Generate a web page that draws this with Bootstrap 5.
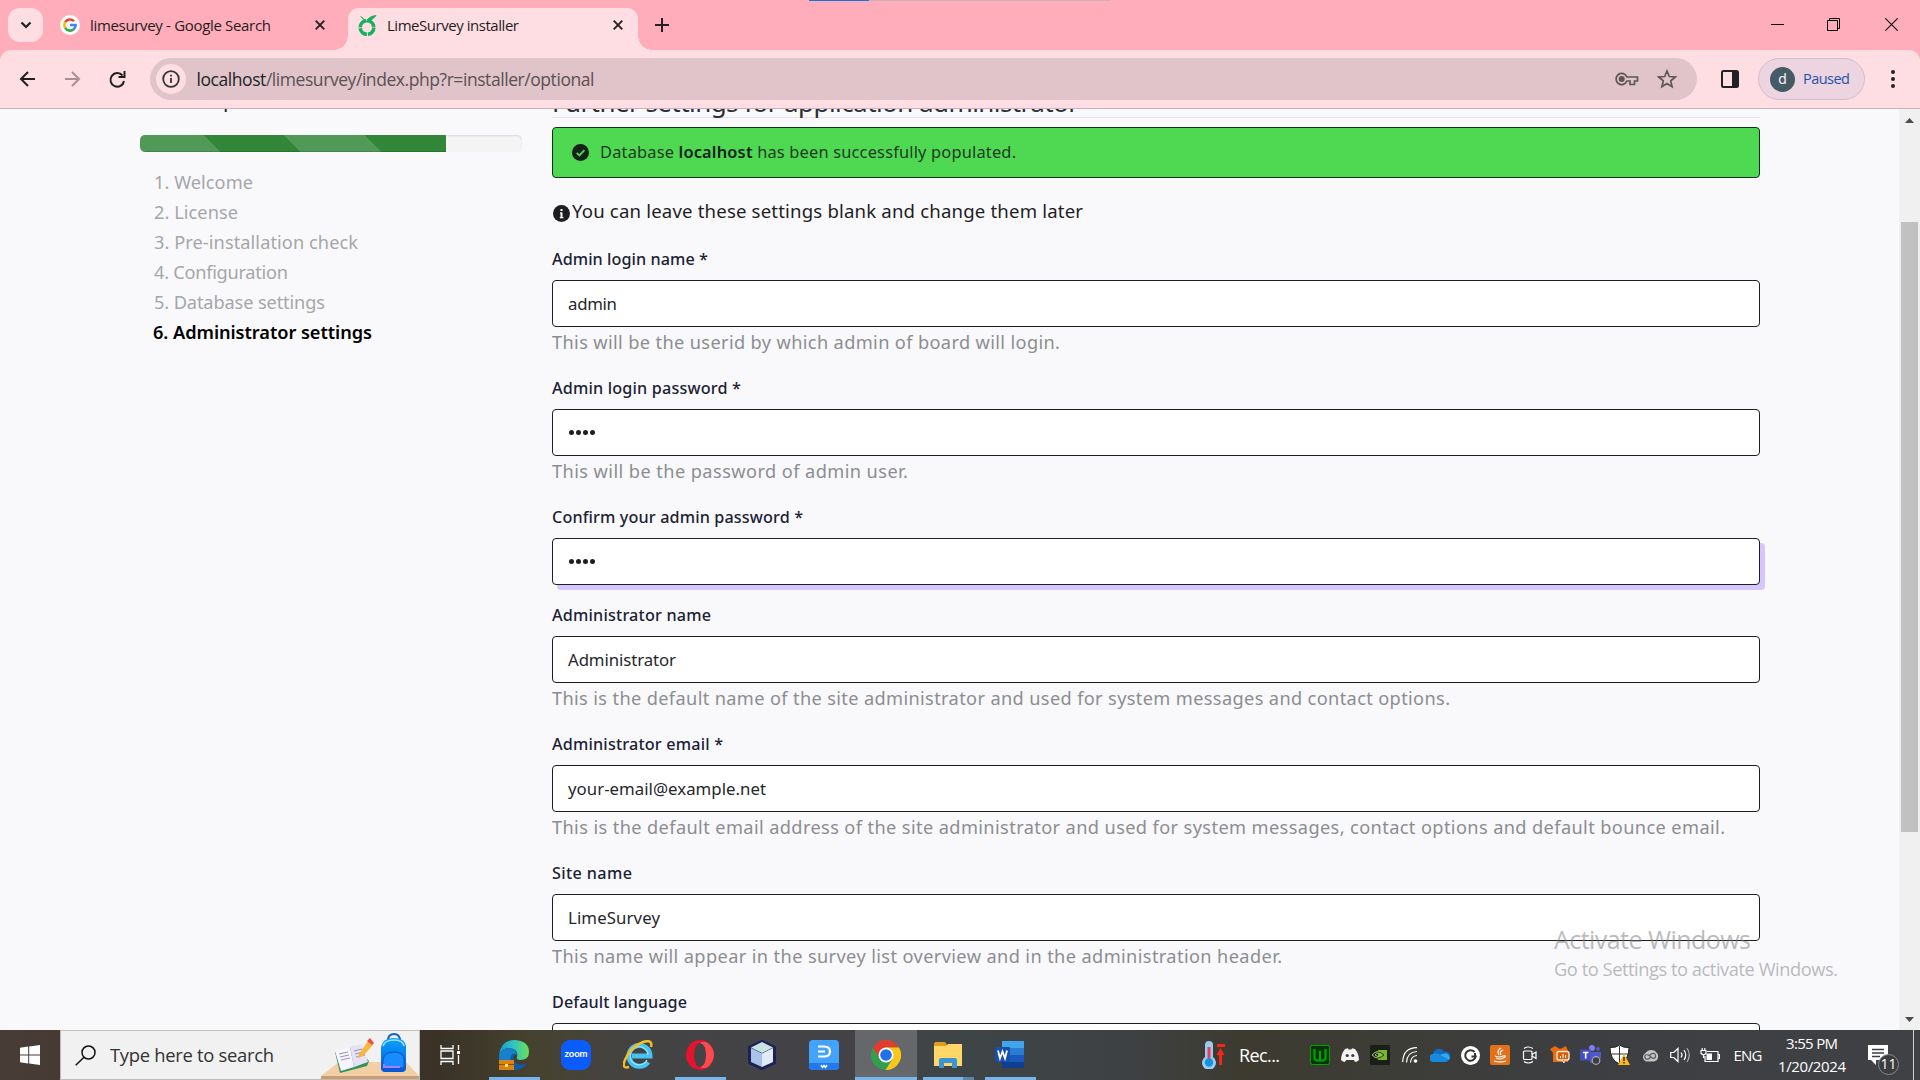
<!DOCTYPE html>
<html lang="en">
<head>
<meta charset="utf-8">
<title>LimeSurvey installer</title>
<link href="https://cdn.jsdelivr.net/npm/bootstrap@5.3.0/dist/css/bootstrap.min.css" rel="stylesheet">
<style>
  body{width:1920px;height:1080px;overflow:hidden;background:#f9f9fc;font-family:"Open Sans","Noto Sans",sans-serif;color:#1e1e1e}
  svg{display:block;flex:none}
  [data-w]{white-space:nowrap}
  .tabstrip{height:50px;background:#ffadba;padding-left:8px}
  .tabsearch{width:35px;height:34px;border-radius:12px;background:#ffdee3}
  .btab{height:42px;margin-top:8px;font-size:15px}
  .btab .ttl{line-height:34px}
  .tab-idle{width:305px;padding:0 23px 8px 17px}
  .tab-on{width:290px;background:#ffdee3;border-radius:11px 11px 0 0;padding:0 15px 8px 8px;position:relative}
  .tab-on:before,.tab-on:after{content:"";position:absolute;bottom:0;width:14px;height:14px}
  .tab-on:before{left:-14px;background:radial-gradient(circle at 0 0,transparent 13.5px,#ffdee3 14px)}
  .tab-on:after{right:-14px;background:radial-gradient(circle at 100% 0,transparent 13.5px,#ffdee3 14px)}
  .loadline{position:absolute;left:809px;top:0;width:301px;height:1px;background:linear-gradient(90deg,#1a73d8 60px,#c9b3ba 60px)}
  .toolwrap{background:#ffadba}
  .toolbar{height:59px;background:#ffdee3;border-bottom:1px solid #cdb0b8;border-radius:11px 11px 0 0;padding:0 18px 0 17px}
  .omni{width:1547px;height:42px;border-radius:21px;background:#e0c4c9;padding:0 20px 0 6px;font-size:17.5px;color:#5b5054}
  .infodot{width:30px;height:30px;border-radius:50%;background:#ffdee3}
  .chip{width:107px;height:42px;border:1px solid #d6bccb;border-radius:21px;background:#ecd4e1;color:#2452a5;font-size:14.5px;padding-left:11px}
  .avatar{width:25px;height:25px;border-radius:50%;background:#455a64;color:#fff;font-size:14px;line-height:24px}
  .page{height:921px;overflow:hidden;font-family:"Noto Sans",Roboto,sans-serif}
  .side{width:382px;margin-left:140px}
  .main{width:1208px;margin-left:30px}
  .pct{height:26px;font-size:21px;line-height:30px;margin-top:-25px}
  .bar{height:17px;margin-top:25px;border-radius:5px;background:#f4f4f4;box-shadow:inset 0 1px 2px rgba(0,0,0,.12)}
  .bar .progress-bar{background:repeating-linear-gradient(45deg,#509956 0 56.8px,#328637 56.8px 113.8px);box-shadow:inset 0 -1px 0 rgba(0,0,0,.13)}
  .steps{margin:15px 0 0 14px;font-size:18.2px;line-height:30px;color:#a5a6a8}
  .steps .now{color:#000;font-weight:600;margin-left:-1px}
  .hd{height:27px;font-size:26px;line-height:32px;margin-top:-18px;color:#2c2e38;border-bottom:1px solid #e4e4e8}
  .hd span{display:block;margin-top:-5px}
  .okbox{height:51px;margin:9px 0 0;padding:0 0 0 19px;background:#4fd953;border:1px solid #14301a;border-radius:4px;font-size:16.4px;color:#1e3a22}
  .okbox b{color:#14231a;font-weight:600}
  .note{height:30px;margin-top:18px;font-size:18.6px}
  .lbl{height:24px;line-height:24px;font-size:16.2px;font-weight:500;color:#1b2233;margin:0 0 9px}
  .fld{height:47px;border:1px solid #1e1e1e;border-radius:4px;background:#fff;padding:0 15px;font-size:16.8px;color:#26272b;line-height:45px}
  .fld.foc{box-shadow:5px 5px 0 #d5c7fd}
  .hlp{height:31px;line-height:31px;font-size:18.2px;color:#8c8d91}
  .grp{height:129px;flex:none}
  .grp.short{height:98px}
  .dots{gap:2px;height:45px;padding-left:1px}
  .dots i{width:5px;height:5px;border-radius:50%;background:#1e1e1e}
  .sbar{width:21px;background:#f0f0f0}
  .thumb{width:17px;height:610px;background:#c1c1c1;margin-top:99px}
  .wmark{position:absolute;left:1554px;top:922px;color:rgba(120,120,120,.5);line-height:1}
  .wm1{font-size:25px;height:34px;line-height:34px}
  .wm2{font-size:18.3px;height:26px;line-height:26px}
  .task{height:50px;background:linear-gradient(90deg,#483c36 0,#42362e 200px,#3a3227 440px,#46422f 530px,#444344 640px,#434247 860px,#3e4547 960px,#3e4143 1130px,#3d3b30 1240px,#3c3d37 1400px,#3d3e41 1560px,#404145 1920px);color:#fff;position:relative}
  .startb{width:60px}
  .srch{width:360px;height:50px;background:#f1f1f1;border:1px solid #bdbdbd;color:#333;font-size:18.4px;padding-left:14px}
  .slot{width:62px;height:50px}
  .view{width:61px;margin-right:2px}
  .hot{background:#66676b}
  .run{box-shadow:inset 0 -3px 0 #76b5ee}
  .run-s{background:linear-gradient(#76b5ee,#76b5ee) 50% 100%/51px 3px no-repeat}
  .run-f{background:linear-gradient(90deg,#76b5ee 40px,#5b86a8 40px) 6px 100%/51px 3px no-repeat}
  .zoomi{width:30px;height:30px;border-radius:9px;background:#0b5cff;font:700 9.5px/28px Lato,sans-serif}
  .meteo{width:264px;padding-left:161px;font-size:18px}
  .tr{width:30px}
  .eng{width:46px;font-size:15px}
  .clk{width:82px;font-size:15px;line-height:23px;margin-top:-1px}
  .noti{width:60px;padding-left:15px}
  .cnt{position:absolute;left:1878px;top:24px;width:21px;height:21px;border-radius:50%;border:1px solid #8b8c90;background:#3b3c40;font-size:14px;line-height:18px}
</style>
<script src="https://cdn.jsdelivr.net/npm/bootstrap@5.3.0/dist/js/bootstrap.bundle.min.js"></script>
</head>
<body>
<div class="loadline"></div>
<header>
  <div class="tabstrip d-flex">
    <div class="tabsearch d-flex align-items-center justify-content-center mt-2">
      <svg width="12" height="8" fill="none" stroke="#1f1f1f" stroke-width="2.2"><path d="M1.5 1.5 6 6l4.500-4.500"/></svg>
    </div>
    <div class="btab tab-idle d-flex align-items-center">
      <svg width="20" height="20" viewBox="0 0 20 20" fill="none" stroke-width="2.600"><circle cx="10" cy="10" r="10" fill="#fff"/><path d="M5.200 7.200A5.600 5.600 0 0 1 14 6.100" stroke="#ea4335"/><path d="M5.200 12.800a5.600 5.600 0 0 1 0-5.700" stroke="#fbbc05"/><path d="M13.700 14.200a5.600 5.600 0 0 1-8.500-1.400" stroke="#34a853"/><path d="M10 10h5.600a5.600 5.600 0 0 1-1.900 4.200" stroke="#4285f4"/></svg>
      <span class="ttl" style="margin-left:10px"><span data-w="181">limesurvey - Google Search</span></span>
      <svg class="ms-auto" width="10" height="10" stroke="#222" stroke-width="1.900"><path d="M.7.7 9.300 9.300M9.300.7.7 9.300"/></svg>
    </div>
    <div class="btab tab-on d-flex align-items-center">
      <svg width="22" height="22" viewBox="0 0 22 22" fill="none" stroke="#17b060"><circle cx="11" cy="13.500" r="6.800" stroke-width="3.600" stroke-dasharray="9.700 .98"/><path d="M5 2.500 10.500 8Q12 2.500 20 1.500q-2 3.500-9.500 6.500z" fill="#17b060" stroke-width="1"/></svg>
      <span class="ttl" style="margin-left:9px"><span data-w="132">LimeSurvey installer</span></span>
      <svg class="ms-auto" width="10" height="10" stroke="#222" stroke-width="1.900"><path d="M.7.7 9.300 9.300M9.300.7.7 9.300"/></svg>
    </div>
    <svg style="margin:18px 0 0 17px" width="14" height="14" stroke="#222" stroke-width="2"><path d="M7 0v14M0 7h14"/></svg>
    <div class="d-flex ms-auto" style="gap:43px;padding:18px 22px 0 0">
      <svg width="13" height="13" stroke="#000"><path d="M0 6.500h13"/></svg>
      <svg width="13" height="13" fill="none" stroke="#000"><path d="M.5 2.500h10v10H.5zM2.500 2.500v-2h10v10h-2"/></svg>
      <svg width="13" height="13" stroke="#111" stroke-width="1.100" style="margin-left:2px"><path d="M.3.3l12.400 12.400M12.700.3.3 12.700"/></svg>
    </div>
  </div>
  <div class="toolwrap">
    <div class="toolbar d-flex align-items-center">
      <svg width="133" height="24" fill="none" stroke="#1f1f1f" stroke-width="2"><path d="M18 12H4.500M11 5 4 12l7 7"/><path d="M48 12h13.500M55 5l7 7-7 7" stroke="#a88f96"/><path d="M105.500 8.500A6.800 6.800 0 1 0 107 14M107.500 4v6h-6"/></svg>
      <div class="omni d-flex align-items-center">
        <div class="infodot d-flex align-items-center justify-content-center"><svg width="18" height="18" fill="none" stroke="#333" stroke-width="1.800"><circle cx="9" cy="9" r="7.800"/><path d="M9 8v5M9 4.800v1.800"/></svg></div>
        <span data-w="398" style="margin-left:10.5px"><span class="text-dark">localhost</span>/limesurvey/index.php?r=installer/optional</span>
        <svg class="ms-auto" width="24" height="14" fill="none" stroke="#5d5558" stroke-width="1.700"><path d="M11.900 5A5.600 5.600 0 1 0 11.900 9H15v3.500h4.500V9h3V5z"/><circle cx="6.700" cy="7" r="2.200" fill="#5d5558"/></svg>
        <svg style="margin-left:18px" width="20" height="20" viewBox="0 0 20 20" fill="none" stroke="#5d5558" stroke-width="1.700"><path d="m10 2 2.300 5.500 6 .5-4.600 3.900 1.400 5.800-5.100-3.100-5.100 3.100 1.400-5.800L1.700 8l6-.5z"/></svg>
      </div>
      <svg style="margin-left:24px" width="18" height="18"><rect x="1" y="1" width="16" height="16" rx="1.500" fill="none" stroke="#202124" stroke-width="2"/><path d="M11 1h6v16h-6z" fill="#202124"/></svg>
      <div class="chip d-flex align-items-center" style="margin-left:19px">
        <div class="avatar text-center">d</div><span data-w="47" style="margin-left:8px">Paused</span>
      </div>
      <svg class="ms-auto" style="margin-right:7px" width="4" height="20" fill="#202124"><circle cx="2" cy="3" r="2"/><circle cx="2" cy="10" r="2"/><circle cx="2" cy="17" r="2"/></svg>
    </div>
  </div>
</header>

<main class="page d-flex">
  <aside class="side">
    <div class="pct"><span data-w="141">83% completed</span></div>
    <div class="bar progress"><div class="progress-bar" style="width:80.1%"></div></div>
    <div class="steps">
      <div><span data-w="99">1. Welcome</span></div>
      <div><span data-w="84">2. License</span></div>
      <div><span data-w="204">3. Pre-installation check</span></div>
      <div><span data-w="134">4. Configuration</span></div>
      <div><span data-w="171">5. Database settings</span></div>
      <div class="now"><span data-w="219">6. Administrator settings</span></div>
    </div>
  </aside>
  <section class="main d-flex flex-column">
    <div class="hd flex-shrink-0"><span><em class="fst-normal" data-w="527">Further settings for application administrator</em></span></div>
    <div class="okbox d-flex align-items-center flex-shrink-0">
      <svg width="17" height="17"><circle cx="8.500" cy="8.500" r="8.500" fill="#17231a"/><path d="m4.700 8.800 2.700 2.700 5-5.300" fill="none" stroke="#4fd953" stroke-width="1.900"/></svg>
      <span data-w="416" style="margin-left:11px">Database <b>localhost</b> has been successfully populated.</span>
    </div>
    <div class="note d-flex align-items-center flex-shrink-0">
      <svg class="mt-1" style="margin-left:1px" width="17" height="17"><circle cx="8.500" cy="8.500" r="8.500" fill="#1e1e1e"/><path d="M8.500 7.500v5.300M8.500 4v2" fill="none" stroke="#fff" stroke-width="2"/><path d="M7 8h2M6.800 12.600h3.600" stroke="#fff" stroke-width="1.200"/></svg>
      <span data-w="511" style="margin-left:2px">You can leave these settings blank and change them later</span>
    </div>
    <div style="height:21px" class="flex-shrink-0"></div>
    <div class="grp"><div class="lbl"><span data-w="156">Admin login name *</span></div><div class="fld"><span data-w="49">admin</span></div><div class="hlp"><span data-w="508">This will be the userid by which admin of board will login.</span></div></div>
    <div class="grp"><div class="lbl"><span data-w="189">Admin login password *</span></div><div class="fld"><div class="dots d-flex align-items-center"><i></i><i></i><i></i><i></i></div></div><div class="hlp"><span data-w="356">This will be the password of admin user.</span></div></div>
    <div class="grp short"><div class="lbl"><span data-w="251">Confirm your admin password *</span></div><div class="fld foc"><div class="dots d-flex align-items-center"><i></i><i></i><i></i><i></i></div></div></div>
    <div class="grp"><div class="lbl"><span data-w="159">Administrator name</span></div><div class="fld"><span data-w="108">Administrator</span></div><div class="hlp"><span data-w="898">This is the default name of the site administrator and used for system messages and contact options.</span></div></div>
    <div class="grp"><div class="lbl"><span data-w="171">Administrator email *</span></div><div class="fld"><span data-w="198">your-email@example.net</span></div><div class="hlp"><span data-w="1173">This is the default email address of the site administrator and used for system messages, contact options and default bounce email.</span></div></div>
    <div class="grp"><div class="lbl"><span data-w="80">Site name</span></div><div class="fld"><span data-w="92">LimeSurvey</span></div><div class="hlp"><span data-w="730">This name will appear in the survey list overview and in the administration header.</span></div></div>
    <div class="grp"><div class="lbl"><span data-w="135">Default language</span></div><div class="fld"></div></div>
  </section>
  <div class="sbar ms-auto d-flex flex-column align-items-center">
    <svg width="9" height="5" style="margin-top:9px" fill="#4b4b4b"><path d="M4.500 0 9 5H0z"/></svg>
    <div class="thumb"></div>
    <svg width="9" height="5" class="mt-auto mb-2" fill="#4b4b4b"><path d="M0 0h9L4.500 5z"/></svg>
  </div>
</main>

<div class="wmark"><div class="wm1"><span data-w="197">Activate Windows</span></div><div class="wm2"><span data-w="284">Go to Settings to activate Windows.</span></div></div>

<footer class="task d-flex align-items-center">
  <div class="startb d-flex justify-content-center"><svg width="20" height="20" fill="#fff"><path d="M0 2.800 8.200 1.600v7.900H0zM9.200 1.400 20 0v9.500H9.200zM0 10.500h8.200v7.900L0 17.200zM9.200 10.500H20V20L9.200 18.600z"/></svg></div>
  <div class="srch d-flex align-items-center">
    <svg width="21" height="21" fill="none" stroke="#111" stroke-width="1.500"><circle cx="13.500" cy="7.500" r="6.500"/><path d="M9 12.200.7 20.300"/></svg>
    <span data-w="164" style="margin-left:14px">Type here to search</span>
    <svg class="ms-auto" width="98" height="48" viewBox="0 0 98 48">
      <defs><linearGradient id="bp" x2="0" y2="1"><stop stop-color="#0aa4ff"/><stop offset="1" stop-color="#0756d8"/></linearGradient></defs>
      <path d="M18 31h67l13 14H0z" fill="#f3cfa6"/><path d="M0 45h98v3H0z" fill="#c89d71"/>
      <path d="M14 21l20-6 14 15-2 5-27 7z" fill="#32925a"/><path d="m14 20 15-4 4 20-13 4z" fill="#f7f5ff"/><path d="m29 16 12-3 6 18-14 5z" fill="#e6e2f5"/>
      <path d="m18 23 9-2m-8 5 9-2m-8 5 9-2m4-7 8-2m-7 5 9-2m-8 5 9-2" stroke="#9892b2" stroke-width="1"/>
      <path d="m38 23 9-13 5 4-10 11-5 2z" fill="#f6b73c"/><path d="m46 10 3-3 4 5-2 2z" fill="#f04e45"/>
      <path d="M67 10q0-7 6-7t6 7" fill="none" stroke="#1767bc" stroke-width="2"/><path d="M60 17q1-10 13-10t12 10v20q0 4-4 4H64q-4 0-4-4z" fill="url(#bp)"/><path d="M62 29q1-8 11-8t10 8v8H62z" fill="#188bff" stroke="#0754bd"/><path d="M63 33v3h16" fill="none" stroke="#a87dff" stroke-width="2"/><path d="M62 15q2-6 11-6t10 6" fill="none" stroke="#a4e2ff" stroke-width="1.500"/>
    </svg>
  </div>
  <div class="slot view d-flex align-items-center justify-content-center"><svg width="21" height="20" fill="none" stroke="#fff" stroke-width="1.300"><path d="M1 0v3.500h12V0M1 20v-3.500h12V20M1 6h12v7.500H1zM18.500 0v5M18.500 10v9"/><path d="M17 6h3v3h-3z" fill="#fff" stroke="none"/></svg></div>
  <div class="slot run-s d-flex align-items-center justify-content-center"><svg width="30" height="30" viewBox="0 0 30 30"><defs><linearGradient id="eg"><stop stop-color="#1599d5"/><stop offset=".5" stop-color="#32c6c1"/><stop offset="1" stop-color="#6be052"/></linearGradient></defs><path d="M0 15Q1 27 16 30q8 0 12-7-8 4-12-1-3-5 0-8Q4 7 0 15z" fill="#0e5ca8"/><path d="M0 15Q2 0 16 0q14 1 14 12 0 8-9 8-4 0-3-3 2-8-8-9Q3 8 0 15z" fill="url(#eg)"/><path d="M0 16q2-8 11-8 7 1 7 8-1-3-4-2-4 2-2 10H0z" fill="#1680cc"/><path d="M0 20h15v10H0z" fill="#d98310"/><path d="M0 24h15v1H0z" fill="#8d4d06"/><path d="M6 24h3v3H6z" fill="#ffe06a"/></svg></div>
  <div class="slot d-flex align-items-center justify-content-center"><div class="zoomi text-center">zoom</div></div>
  <div class="slot d-flex align-items-center justify-content-center"><svg width="30" height="30" viewBox="0 0 30 30" fill="none"><path d="M25 22a10.500 10.500 0 1 1 2-6H9" stroke="#47c3f3" stroke-width="5"/><path d="M24 20a9 9 0 1 1 1-5" stroke="#9be6ff" stroke-width="1.200"/><path d="M6 27q-8 2-4-7Q7 7 20 2q10-3 8 5" stroke="#f5bd23" stroke-width="2.500"/></svg></div>
  <div class="slot run-s d-flex align-items-center justify-content-center"><svg width="30" height="30" viewBox="0 0 30 30"><path fill-rule="evenodd" d="M15 0a14 15 0 1 1 0 30 14 15 0 1 1 0-30zm0 3a6 12 0 1 0 0 24 6 12 0 1 0 0-24z" fill="#e3142c"/><path d="M15 3q4-3 9 1 10 10 0 22-5 4-9 1 6-1 6-12T15 3z" fill="#fa4c50"/></svg></div>
  <div class="slot d-flex align-items-center justify-content-center"><svg width="30" height="30" viewBox="0 0 30 30" stroke-linejoin="round"><path d="M15 1 28 7v16L15 29 2 23V7z" fill="#1b2359" stroke="#1b2359" stroke-width="2"/><path d="M15 2 26 7.500 15 13 4 7.500z" fill="#c8e3e2"/><path d="M4 8l11 5.500V27L4 22z" fill="#a9c2e8"/><path d="M26 8l-11 5.500V27l11-5z" fill="#e1ebf8"/></svg></div>
  <div class="slot d-flex align-items-center justify-content-center"><svg width="30" height="30" viewBox="0 0 30 30" fill="none"><rect width="30" height="30" rx="4" fill="#43a3fb"/><path d="M0 23h30v3q0 4-4 4H4q-4 0-4-4z" fill="#2477ec"/><path d="M9 6.500h6q6 0 6 5t-6 5H9M9 11.500h7" stroke="#fff" stroke-width="2.200"/><path d="m12 25 1.500 2.500L15 25.500l1.500 2L18 25" stroke="#fff" stroke-width="1.500"/></svg></div>
  <div class="slot hot run d-flex align-items-center justify-content-center"><svg width="30" height="30" viewBox="0 0 30 30"><circle cx="15" cy="15" r="15" fill="#30a04f"/><path d="M2 7.500A15 15 0 0 1 28 7.500H15L8.500 18.500z" fill="#e33b2e"/><path d="M15 7.500h13A15 15 0 0 1 14.500 30l7-11z" fill="#fcc61b"/><circle cx="15" cy="15" r="7.500" fill="#fff"/><circle cx="15" cy="15" r="5.800" fill="#1f72e8"/></svg></div>
  <div class="slot run-f d-flex align-items-center justify-content-center"><svg width="30" height="26" viewBox="0 0 30 26"><path d="M1 2q0-2 2-2h9l2 3h13q2 0 2 2v19H1z" fill="#dda01a"/><path d="M1 4h12l2-2h14v22H1z" fill="#ffd768"/><path d="M6 26v-8q0-2 2-2h14q2 0 2 2v8h-5v-5h-8v5z" fill="#3b94d4"/></svg></div>
  <div class="slot run-s d-flex align-items-center justify-content-center"><svg width="30" height="28" viewBox="0 0 30 28"><path d="M7 0h22v7H7z" fill="#41a5ee"/><path d="M7 7h22v7H7z" fill="#2b7cd3"/><path d="M7 14h22v7H7z" fill="#185abd"/><path d="M7 21h22v6H7z" fill="#103f91"/><rect y="6" width="15" height="15" rx="1" fill="#174fa9"/><path d="m3 9.500 2 8 2.500-7 2.500 7 2-8" fill="none" stroke="#fff" stroke-width="1.800"/></svg></div>
  <div class="meteo d-flex align-items-center">
    <svg width="23" height="28" viewBox="0 0 23 28"><path d="M3 4a4 4 0 0 1 8 0v12a7 7 0 1 1-8 0z" fill="#9dcaf0"/><path d="M7 6v13" stroke="#e8405a" stroke-width="3"/><circle cx="7" cy="21.500" r="4.200" fill="#1594de"/><path d="M15 4.500h8M18.500 24V12" stroke="#f9231c" stroke-width="3"/><path d="m18.500 7 4 7h-8z" fill="#f9231c"/></svg>
    <span data-w="41" style="margin-left:14px">Rec...</span>
  </div>
  <div class="tr"><svg class="mx-auto" width="20" height="20" fill="none" stroke="#00a400"><rect x=".5" y=".5" width="19" height="19" rx="2" fill="#06340c"/><path d="M4.500 4v10l2 1.500h7l2-1.500V4M10 6v9" stroke-width="2.200"/></svg></div>
  <div class="tr"><svg class="mx-auto" width="18" height="14" viewBox="0 0 18 14"><path d="M4 1l3-.8.700 1.300h2.600l.7-1.300L14 1q4 5 4 11-2 2-4 2l-1-2H5l-1 2q-2 0-4-2Q0 6 4 1z" fill="#f3f3f3"/><circle cx="6.200" cy="7.500" r="1.600" fill="#3d3e38"/><circle cx="11.800" cy="7.500" r="1.600" fill="#3d3e38"/></svg></div>
  <div class="tr"><svg class="mx-auto" width="20" height="20" fill="none"><path d="M0 0h20v20H0z" fill="#1c1e1a"/><path d="M8 5h9v10H8z" fill="#76b82a"/><path d="M2 10q6-7 12 0-6 6-12 0zM5 10q3-4 6 0-3 3-6 0z" stroke="#9ccc65"/><path d="M8 7q3 0 6 3-3 3-6 3" stroke="#1c3a10"/></svg></div>
  <div class="tr"><svg class="mx-auto" width="16" height="16" fill="none" stroke="#fff" stroke-width="1.200"><path d="M.7 15Q1 1 15 .7M4.500 15.500Q5 5 15 4.500M8.500 15.500Q9 9 15 8.500"/><circle cx="13.500" cy="14" r="1.800" fill="#fff" stroke="none"/></svg></div>
  <div class="tr"><svg class="mx-auto" width="20" height="14" viewBox="0 0 20 14"><path d="M4 14a4 4 0 0 1-1-8A6 6 0 0 1 14 3.500 5 5 0 0 1 16 14z" fill="#0f6cc4"/><path d="M3 6q4-2 7 1l8 5-2 2H4a4 4 0 0 1-1-8z" fill="#1989dd"/><path d="M10 7q3-2 6-1.500A4.300 4.300 0 0 1 19 12z" fill="#31aaf0"/></svg></div>
  <div class="tr"><svg class="mx-auto" width="19" height="19" fill="none" stroke="#333" stroke-width="2"><circle cx="9.500" cy="9.500" r="9.500" fill="#fff" stroke="none"/><path d="M13.500 6A5.300 5.300 0 1 0 14.700 10.500H10.500M14 7v4"/></svg></div>
  <div class="tr"><svg class="mx-auto" width="20" height="20" fill="none" stroke="#fff" stroke-width="1.200"><rect width="20" height="20" rx="2" fill="#e2701c" stroke="none"/><path d="M11 3Q6 6 9 10M13 5q-4 2-2 5M5 11q4 2 8 0 3-1 2 1l-2 1M6 13q4 2 7 0M4 16q6 2 12 0"/></svg></div>
  <div class="tr"><svg class="mx-auto" width="16" height="18" fill="none" stroke="#fff" stroke-width="1.200"><rect x="1.500" y="5" width="8.500" height="8.500" rx="1"/><path d="m10 8.500 4-2.500v6.500l-4-2.500M2 2.500Q6-.5 11 2.500M2 15.500q4 3 9 0"/></svg></div>
  <div class="tr"><svg class="mx-auto" width="20" height="18"><path d="M0 3l5-3 5 3 6-3 2 5v11H3V7z" fill="#e96c12"/><rect x="7" y="5.500" width="12" height="8.500" rx="2" fill="#d85d0b" stroke="#ffe5ce" stroke-width="1.400"/><path d="M10.500 12V10M13 12V8M15.500 12V9M12 14l2 3v-3" stroke="#fff"/></svg></div>
  <div class="tr"><svg class="mx-auto" width="21" height="20" viewBox="0 0 21 20"><circle cx="12" cy="3" r="3" fill="#7b83eb"/><circle cx="18" cy="4" r="2" fill="#5059c9"/><path d="M10 7h11v6l-5 5h-6z" fill="#5059c9"/><path d="M0 4.500h11v11H0z" fill="#4550c0"/><path d="M3 7.500h5.500M5.700 7.500v6" stroke="#fff" stroke-width="1.600"/><circle cx="16" cy="15.500" r="3.800" fill="#3d3e41" stroke="#aaa" stroke-width="1.200"/></svg></div>
  <div class="tr"><svg class="mx-auto" width="20" height="20"><path d="M9.500 0Q13 3 19 2.500 19 15 9.500 19 0 15 0 2.500 6 3 9.500 0z" fill="#fff" stroke="#222"/><path d="M9.500 1v17M0 9h19" stroke="#333"/><path d="M14 8.500 20 20H8z" fill="#fdb913"/><path d="M14 12v4M14 17v1.500" stroke="#222" stroke-width="1.400"/></svg></div>
  <div class="tr"><svg class="mx-auto" width="18" height="13" fill="none" stroke="#555"><path d="M5 12.500a4.500 4.500 0 0 1-1-8Q8-1 14 2q5 4 2 9l-3 1.500z" fill="#c5c5c5" stroke="none"/><path d="M9.500 8.500Q5 12 4 8.500T7.500 6l4 3.200q3.500.5 3-2.700t-4.500-1.500L8.500 6.500" stroke-width="1.200"/></svg></div>
  <div class="tr"><svg class="mx-auto" width="20" height="16" fill="none" stroke="#fff" stroke-width="1.200"><path d="M.7 5.500h3L8 1.500v13L3.700 10.500h-3zM11 5.500q2 2.500 0 5M14 3q3.500 5 0 10"/><path d="M17 1q4.500 7 0 14" stroke="#aaa"/></svg></div>
  <div class="tr"><svg class="mx-auto" width="20" height="15" fill="none" stroke="#fff" stroke-width="1.200"><path d="M7 3.500h11v10H5V8M18 6.500h1.500v4H18M1 2.500h5v3Q3.500 8 1 5.500zM2.200 0v2.500M4.800 0v2.500M3.500 7v3"/><path d="M6.500 5.500H12V12H6.500z" fill="#fff" stroke="none"/></svg></div>
  <div class="eng text-center"><span data-w="29">ENG</span></div>
  <div class="clk text-center"><div><span data-w="52">3:55 PM</span></div><div><span data-w="68">1/20/2024</span></div></div>
  <div class="noti"><svg width="21" height="20"><path d="M0 0h20v15H8v5l-5-5H0z" fill="#fff"/><path d="M4 4.500h12M4 8h12M4 11.500h8" stroke="#3d3e42" stroke-width="1.300"/></svg></div>
  <div class="cnt text-center">11</div>
  <div class="vr opacity-75"></div>
</footer>
<script>
  document.querySelectorAll('[data-w]').forEach(function (el) {
    el.style.display = 'inline-block';
    var n = el.textContent.length;
    var gap = (el.dataset.w - el.getBoundingClientRect().width) / (n - 1);
    el.style.letterSpacing = gap.toFixed(3) + 'px';
    el.style.marginRight = (-gap).toFixed(3) + 'px';
  });
</script>
</body>
</html>
